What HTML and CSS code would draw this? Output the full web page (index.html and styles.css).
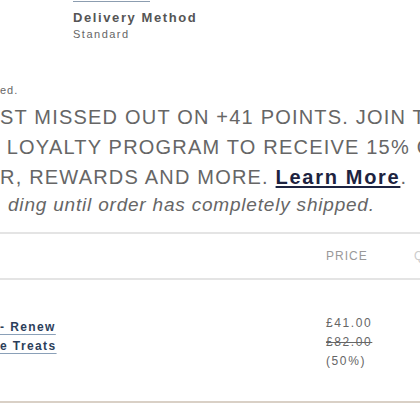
FILE: index.html
```html
<!DOCTYPE html>
<html>
<head>
<meta charset="utf-8">
<link rel="stylesheet" href="styles.css">
</head>
<body>
<div class="page">
  <section class="delivery">
    <div class="rule"></div>
    <div class="d-title">Delivery Method</div>
    <div class="d-sub">Standard</div>
  </section>
  <p class="note">ed.</p>
  <section class="loyalty">
    <div class="l-line">ST MISSED OUT ON +41 POINTS. JOIN THE</div>
    <div class="l-line">&nbsp;LOYALTY PROGRAM TO RECEIVE 15% OFF</div>
    <div class="l-line">R, REWARDS AND MORE. <a class="learn" href="#">Learn More</a>.</div>
    <div class="l-italic">ding until order has completely shipped.</div>
  </section>
  <section class="table">
    <div class="thead">
      <div class="th-product"></div>
      <div class="th-price">PRICE</div>
      <div class="th-next">Q</div>
    </div>
    <div class="trow">
      <div class="td-product">
        <a class="prod-link" href="#">- Renew</a><br>
        <a class="prod-link" href="#">e Treats</a>
      </div>
      <div class="td-price">
        <div>£41.00</div>
        <div class="strike">£82.00</div>
        <div>(50%)</div>
      </div>
    </div>
  </section>
</div>
</body>
</html>
```
FILE: styles.css
```css
html, body {
  margin: 0;
  padding: 0;
  background: #fff;
  overflow: hidden;
}
body {
  font-family: "Liberation Sans", Arial, sans-serif;
  color: #666;
  width: 420px;
  height: 420px;
}
.page {
  width: 420px;
  overflow: hidden;
}
.delivery {
  padding-left: 73px;
}
.rule {
  width: 77px;
  height: 1px;
  background: #8c9db0;
  margin-top: 1px;
}
.d-title {
  margin-top: 8px;
  font-size: 13px;
  font-weight: bold;
  letter-spacing: 1.6px;
  color: #555;
  line-height: 15px;
}
.d-sub {
  margin-top: 3px;
  font-size: 11px;
  letter-spacing: 1.5px;
  color: #666;
  line-height: 13px;
}
.note {
  margin: 43px 0 0 0;
  font-size: 11px;
  letter-spacing: 1px;
  line-height: 12px;
  color: #666;
}
.loyalty {
  margin-top: 6px;
  white-space: nowrap;
}
.l-line {
  font-size: 20px;
  line-height: 30px;
  letter-spacing: 1.2px;
  color: #666;
}
.learn {
  color: #1d2340;
  font-weight: bold;
  letter-spacing: 1.7px;
  text-decoration: underline;
  text-underline-offset: 2px;
}
.l-italic {
  font-size: 19px;
  font-style: italic;
  letter-spacing: 0.8px;
  line-height: 26px;
  color: #666;
  padding-left: 8px;
}
.table {
  margin-top: 14px;
}
.thead {
  display: grid;
  grid-template-columns: 326px 1fr 6px;
  align-items: center;
  height: 44px;
  border-top: 2px solid #e4e4e4;
  border-bottom: 2px solid #e4e4e4;
}
.th-price {
  font-size: 12px;
  letter-spacing: 1px;
  color: #999;
}
.th-next {
  font-size: 12px;
  color: #ccc;
  overflow: hidden;
}
.trow {
  display: grid;
  grid-template-columns: 326px 1fr;
  align-items: center;
  height: 121px;
  border-bottom: 2px solid #d9d0c6;
}
.td-product {
  line-height: 18px;
  margin-top: -9px;
}
.prod-link {
  font-size: 12px;
  font-weight: bold;
  letter-spacing: 1.4px;
  color: #2c3e5a;
  text-decoration: underline;
  text-decoration-color: #8aa0b8;
  text-underline-offset: 3px;
}
.td-price {
  font-size: 12px;
  letter-spacing: 1.6px;
  line-height: 19px;
  color: #666;
  margin-top: 4px;
}
.strike {
  text-decoration: line-through;
}
```
